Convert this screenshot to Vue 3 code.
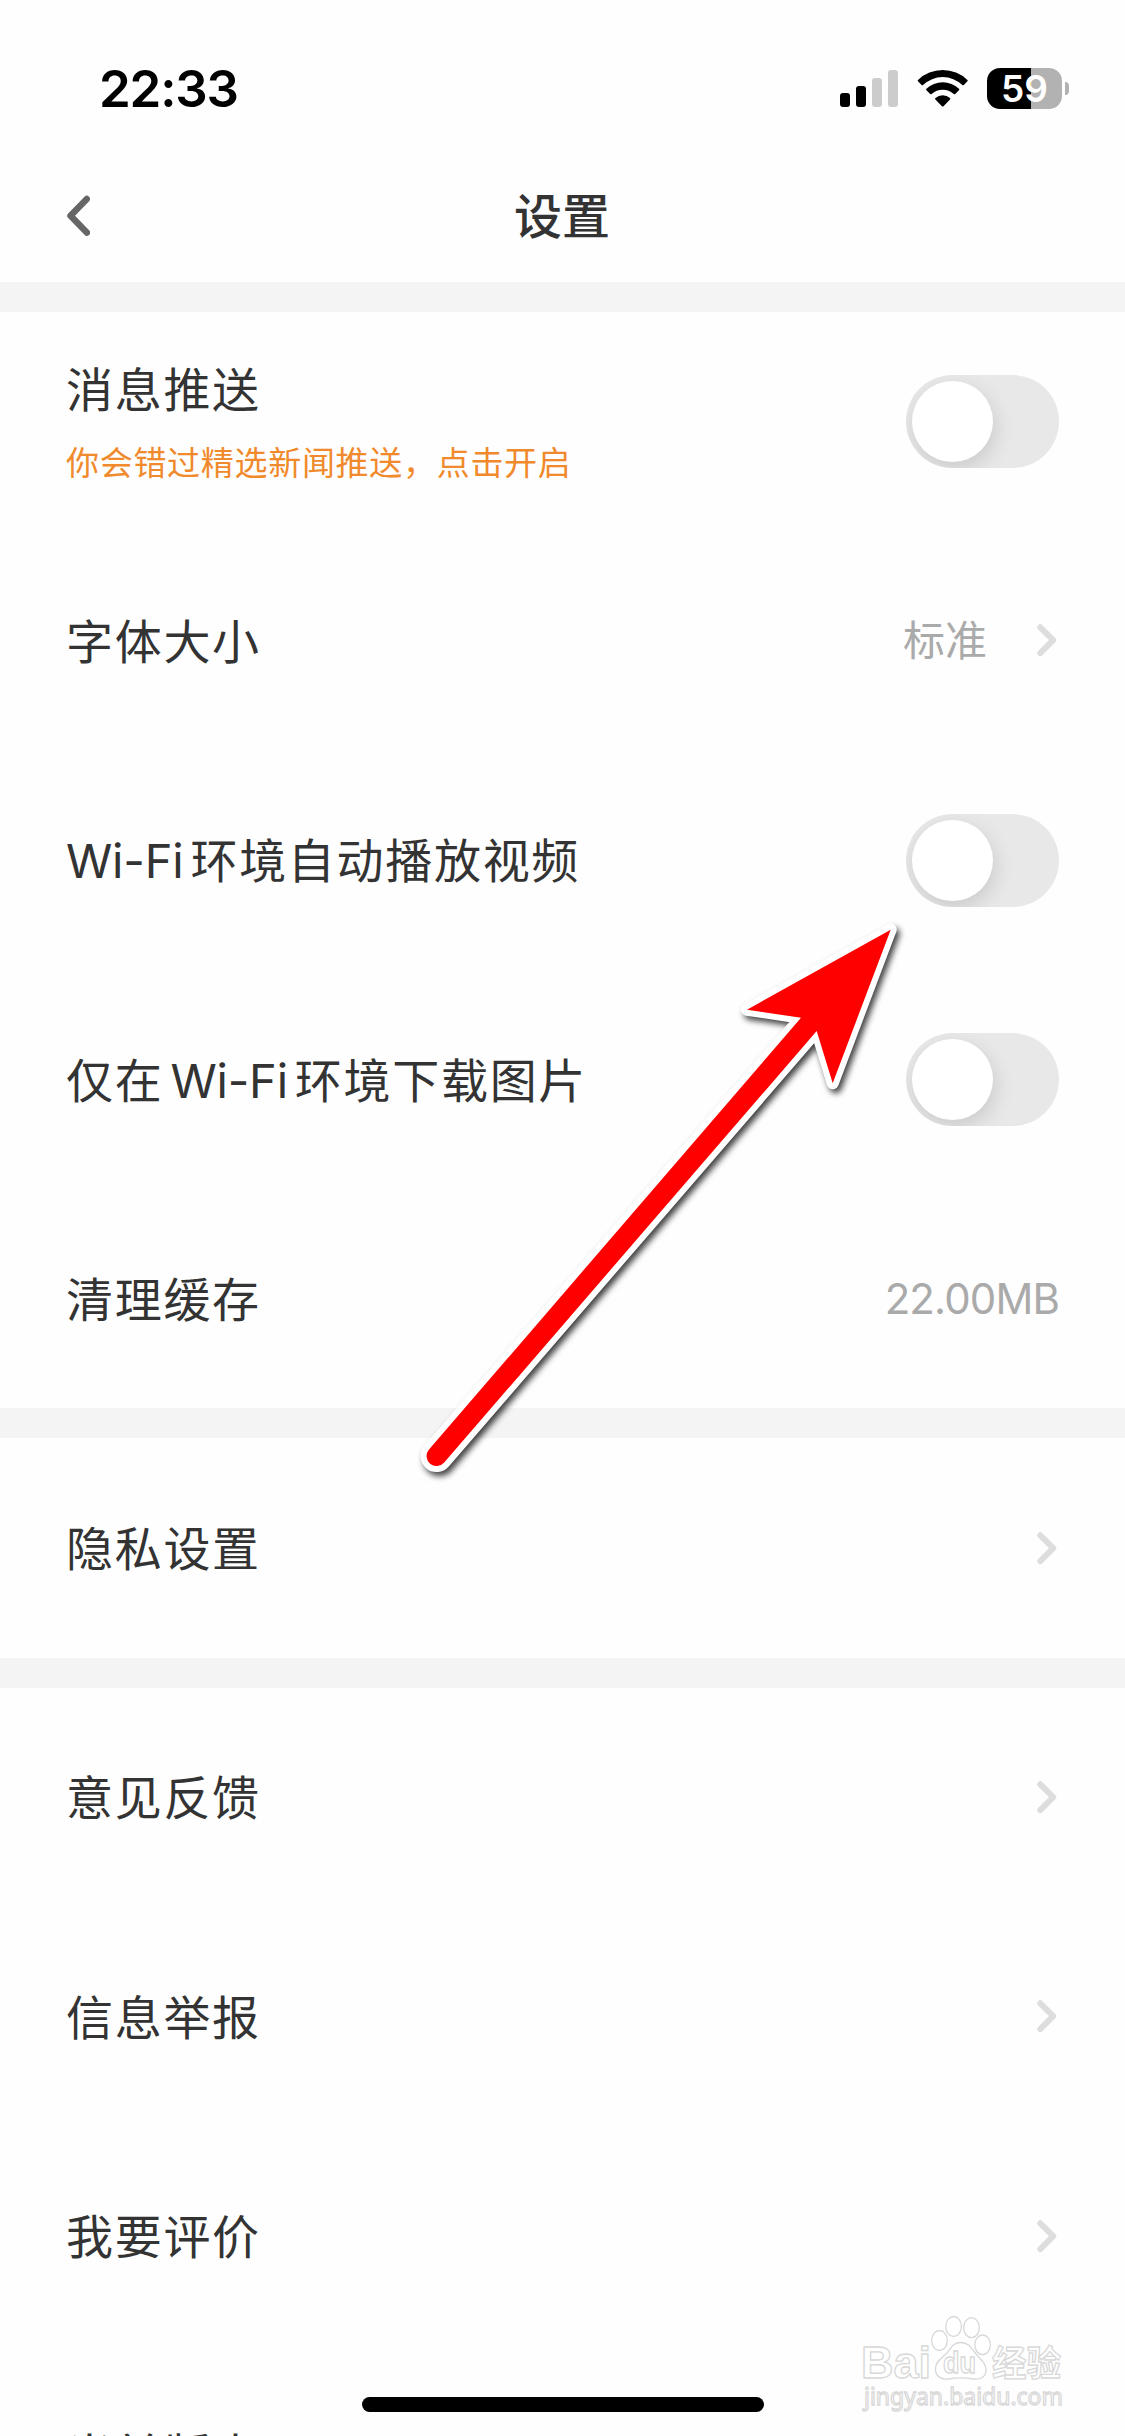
<script setup>
import { ref } from 'vue'

// Each label is split into parts so latin words keep their own spacing
const groups = ref([
  [
    {
      key: 'push',
      label: [{ text: '消息推送' }],
      tip: '你会错过精选新闻推送，点击开启',
      type: 'switch',
      on: false,
    },
    { key: 'font', label: [{ text: '字体大小' }], type: 'link', value: '标准' },
    {
      key: 'autoplay',
      label: [{ text: 'Wi-Fi', latin: true }, { text: '环境自动播放视频' }],
      type: 'switch',
      on: false,
    },
    {
      key: 'download',
      label: [{ text: '仅在' }, { text: 'Wi-Fi', latin: true, inner: true }, { text: '环境下载图片' }],
      type: 'switch',
      on: false,
    },
    { key: 'cache', label: [{ text: '清理缓存' }], type: 'text', value: '22.00MB' },
  ],
  [{ key: 'privacy', label: [{ text: '隐私设置' }], type: 'link' }],
  [
    { key: 'feedback', label: [{ text: '意见反馈' }], type: 'link' },
    { key: 'report', label: [{ text: '信息举报' }], type: 'link' },
    { key: 'rate', label: [{ text: '我要评价' }], type: 'link' },
    { key: 'version', label: [{ text: '当前版本' }], type: 'none' },
  ],
])

function toggle(item) {
  if (item.type === 'switch') {
    item.on = !item.on
  }
}
</script>

<template>
  <div class="phone">
    <!-- Status bar -->
    <div class="status-bar">
      <span class="clock">22:33</span>
      <div class="status-icons">
        <svg class="signal" width="58" height="38" viewBox="0 0 58 38">
          <rect x="0" y="23" width="10" height="14" rx="3" fill="#000" />
          <rect x="16" y="16" width="10" height="21" rx="3" fill="#000" />
          <rect x="32" y="8" width="10" height="29" rx="3" fill="#ccc" />
          <rect x="48" y="0" width="10" height="37" rx="3" fill="#ccc" />
        </svg>
        <svg class="wifi" width="52" height="38" viewBox="0 0 52 38">
          <path d="M1 9.9 Q0.3 10.6 1 11.3 L4.6 15 Q5.3 15.7 6 15 A28.5 28.5 0 0 1 45.4 15 Q46.1 15.7 46.8 15 L50.4 11.3 Q51.1 10.6 50.4 9.9 A35.8 35.8 0 0 0 1 9.9 Z" />
          <path d="M9.4 18.8 Q8.7 19.5 9.4 20.2 L13.2 24 Q13.9 24.7 14.6 24 A16.4 16.4 0 0 1 36.8 24 Q37.5 24.7 38.2 24 L42 20.2 Q42.7 19.5 42 18.8 A23.8 23.8 0 0 0 9.4 18.8 Z" />
          <path d="M18.4 28 Q17.7 28.8 18.4 29.5 L24.9 36.2 Q25.7 37 26.5 36.2 L33 29.5 Q33.7 28.8 33 28 A11.4 11.4 0 0 0 18.4 28 Z" />
        </svg>
        <div class="battery">
          <div class="battery-body">59</div>
          <div class="battery-cap"></div>
        </div>
      </div>
    </div>

    <!-- Nav bar -->
    <div class="nav-bar">
      <svg class="back" width="24" height="42" viewBox="0 0 24 42">
        <path d="M20.8 4 L4.5 20.8 L20.8 37.6" />
      </svg>
      <h1>设置</h1>
    </div>

    <!-- Setting groups -->
    <div v-for="(group, index) in groups" :key="index" class="group">
      <div v-for="item in group" :key="item.key" class="row" @click="toggle(item)">
        <div class="row-left">
          <div class="label" :class="{ 'label-tip': item.tip }">
            <span
              v-for="part in item.label"
              :key="part.text"
              :class="{ latin: part.latin, inner: part.inner }"
              >{{ part.text }}</span
            >
          </div>
          <div v-if="item.tip" class="tip">{{ item.tip }}</div>
        </div>
        <div v-if="item.type === 'switch'" class="switch" :class="{ on: item.on }">
          <div class="knob"></div>
        </div>
        <div v-else class="row-right">
          <span v-if="item.value" class="value" :class="{ size: item.type === 'text' }">{{
            item.value
          }}</span>
          <svg
            v-if="item.type === 'link'"
            class="chevron"
            width="20"
            height="33"
            viewBox="0 0 20 33"
          >
            <path d="M3.3 3.3 L16.2 16.2 L3.3 29.1" />
          </svg>
        </div>
      </div>
    </div>

    <!-- Pointer arrow -->
    <svg class="arrow" width="1125" height="2436" viewBox="0 0 1125 2436">
      <path
        class="arrow-edge"
        d="M890.7 929.7 L747 1009.7 L801 1017.7 L429 1449.6 A9.9 9.9 0 0 0 444.2 1462.6 L816.7 1031 L832.7 1083.3 Z"
      />
      <path
        class="arrow-fill"
        d="M890.7 929.7 L747 1009.7 L801 1017.7 L429 1449.6 A9.9 9.9 0 0 0 444.2 1462.6 L816.7 1031 L832.7 1083.3 Z"
      />
    </svg>

    <!-- Watermark -->
    <svg class="watermark" width="225" height="116" viewBox="0 0 225 116">
      <g class="mark">
        <text x="1" y="57.5" font-size="45" font-weight="700" textLength="70" lengthAdjust="spacingAndGlyphs">Bai</text>
        <ellipse cx="79.5" cy="20.5" rx="7.8" ry="10" />
        <ellipse cx="93.6" cy="6.5" rx="7.8" ry="10" />
        <ellipse cx="111.5" cy="7.7" rx="7.8" ry="10" />
        <ellipse cx="122.6" cy="24.8" rx="7.8" ry="9.8" />
        <path
          d="M101 22.5 C109 22.5 112 29 116 34 C121 40 126 43 126 50 C126 57 120 60 114 59 C105 57.5 97 57.5 88 59 C81 60 75 56 75.5 48 C76 41 82 38 87 33 C91 28 93 22.5 101 22.5 Z"
        />
        <text x="83" y="53" font-size="29" font-weight="700" textLength="33" lengthAdjust="spacingAndGlyphs">du</text>
        <text class="cjk" x="132" y="56" font-size="35" font-weight="700" textLength="69" lengthAdjust="spacingAndGlyphs">经验</text>
        <text class="url" x="4" y="84.5" font-size="24" textLength="199" lengthAdjust="spacingAndGlyphs">jingyan.baidu.com</text>
      </g>
    </svg>

    <div class="home-bar"></div>
  </div>
</template>

<style>
body {
  margin: 0;
  background: #fff;
}
</style>

<style scoped>
.phone {
  position: relative;
  width: 1125px;
  height: 2436px;
  overflow: hidden;
  background: #fefefe;
  font-family: Inter, 'Noto Sans CJK SC', sans-serif;
  color: #333;
}

.status-bar {
  display: flex;
  justify-content: space-between;
  align-items: center;
  box-sizing: border-box;
  height: 150px;
  padding: 0 56px 0 99px;
}

.clock {
  margin-top: 28px;
  font-size: 51px;
  font-weight: 600;
  letter-spacing: -1.2px;
  line-height: 60px;
  color: #000;
}

.status-icons {
  display: flex;
  align-items: center;
  margin-top: 27px;
}

.wifi {
  margin-left: 19px;
}

.battery {
  display: flex;
  align-items: center;
  margin-left: 18px;
}

.battery-body {
  width: 75px;
  height: 41px;
  border-radius: 13px;
  background: linear-gradient(to right, #000 44px, #b2b2b2 44px);
  color: #fff;
  font-size: 37px;
  font-weight: 600;
  line-height: 41px;
  text-align: center;
}

.battery-cap {
  width: 4px;
  height: 13px;
  margin-left: 3px;
  border-radius: 0 6px 6px 0;
  background: #b2b2b2;
}

.nav-bar {
  display: flex;
  align-items: center;
  height: 132px;
  padding: 0 66px;
}

.back {
  fill: none;
  stroke: #666;
  stroke-width: 6.5;
  stroke-linecap: round;
  stroke-linejoin: round;
}

.nav-bar h1 {
  flex: 1;
  margin: 0 25px 0 0;
  padding-top: 2px;
  font-size: 48px;
  font-weight: 500;
  line-height: 66px;
  text-align: center;
}

.group {
  border-top: 30px solid #f4f4f4;
}

.row {
  display: flex;
  justify-content: space-between;
  align-items: center;
  height: 219.3px;
  padding: 0 66px;
}

.row-left {
  padding-top: 2px;
}

.label {
  display: flex;
  font-size: 47px;
  letter-spacing: 1.7px;
  line-height: 66px;
}

.label-tip {
  line-height: 80px;
}

.latin {
  letter-spacing: -0.2px;
  margin-right: 7px;
}

.inner {
  margin-left: 7px;
}

.tip {
  font-size: 33px;
  letter-spacing: 0.7px;
  line-height: 66px;
  color: #f08a2c;
}

.switch {
  box-sizing: border-box;
  width: 153px;
  height: 93px;
  padding: 6px;
  border-radius: 47px;
  background: #e8e8e8;
  overflow: hidden;
}

.switch.on {
  background: #34c759;
}

.knob {
  width: 81px;
  height: 81px;
  border-radius: 50%;
  background: #fff;
  box-shadow: 2px 7px 20px rgba(0, 0, 0, 0.13);
}

.switch.on .knob {
  margin-left: 60px;
}

.row-right {
  display: flex;
  align-items: center;
}

.value {
  margin-right: 50px;
  font-size: 42px;
  line-height: 60px;
  color: #aaa;
}

.size {
  margin-right: 0;
  letter-spacing: -0.9px;
}

.chevron {
  margin-right: 2px;
  fill: none;
  stroke: #ddd;
  stroke-width: 6;
  stroke-linecap: round;
  stroke-linejoin: round;
}

.arrow {
  position: absolute;
  top: 0;
  left: 0;
  pointer-events: none;
}

.arrow-edge {
  fill: #fff;
  stroke: #fff;
  stroke-width: 12;
  stroke-linejoin: round;
  filter: drop-shadow(3px 4px 3px rgba(0, 0, 0, 0.75));
}

.arrow-fill {
  fill: #f00;
}

.watermark {
  position: absolute;
  left: 860px;
  top: 2320px;
  overflow: visible;
}

.mark {
  fill: #fff;
  stroke: #d8d8d8;
  stroke-width: 1.3;
  font-family: 'Liberation Sans', sans-serif;
}

.cjk {
  font-family: 'Noto Sans CJK SC', sans-serif;
}

.url {
  font-family: 'Noto Sans', sans-serif;
}

.home-bar {
  position: absolute;
  left: 362px;
  top: 2397px;
  width: 402px;
  height: 15px;
  border-radius: 8px;
  background: #000;
}
</style>
